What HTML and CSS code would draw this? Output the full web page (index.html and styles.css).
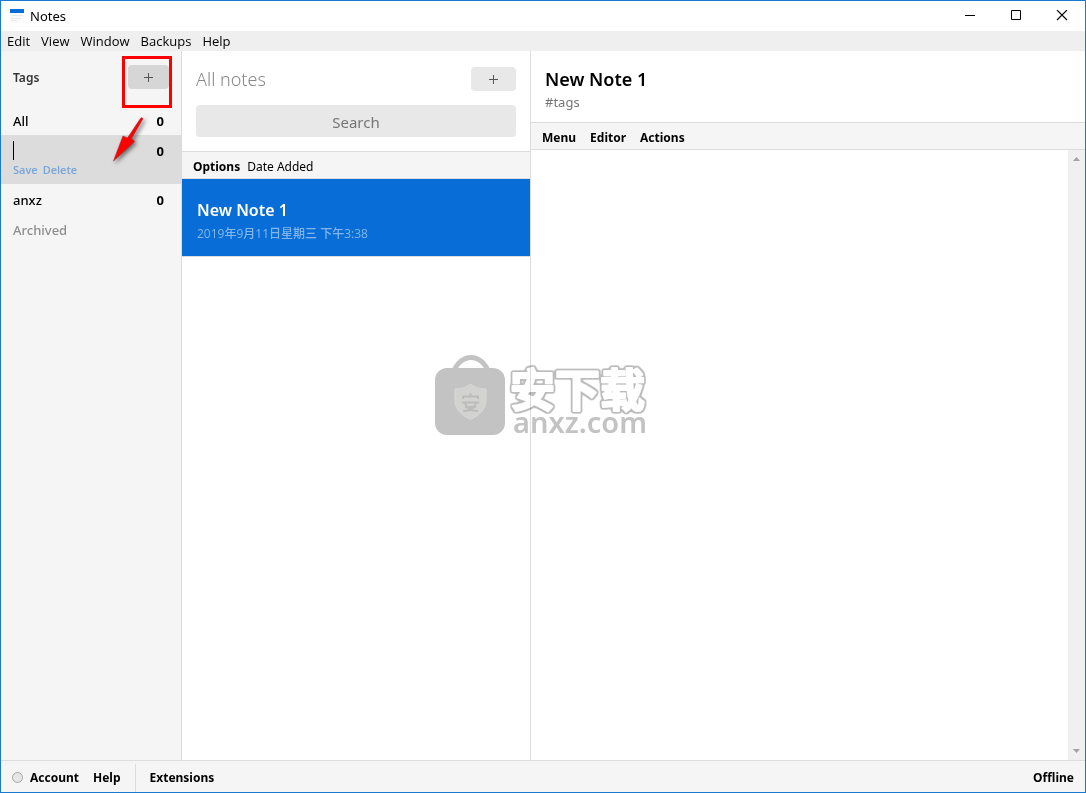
FILE: index.html
```html
<!DOCTYPE html>
<html lang="en">
<head>
<meta charset="utf-8">
<title>Notes</title>
<link rel="stylesheet" href="styles.css">
</head>
<body>
<div class="window">
  <header class="titlebar">
    <svg class="app-icon" width="14" height="14" viewBox="0 0 14 14" aria-hidden="true"><path fill="#fafafa" d="M0 0h14v14H0z"/><path fill="#086dd6" d="M0 0h14v4H0z"/><path stroke="#e9e9e9" d="M1 6.500h12M1 9.500h10M1 11.500h6"/></svg>
    <span class="app-title">Notes</span>
    <div class="window-controls">
      <button class="window-button" aria-label="Minimize"><svg width="12" height="12" viewBox="0 0 12 12"><path stroke="#000" d="M1 5.500h10"/></svg></button>
      <button class="window-button" aria-label="Maximize"><svg width="12" height="12" viewBox="0 0 12 12"><path fill="none" stroke="#000" d="M1.500 .5h9v9h-9z"/></svg></button>
      <button class="window-button" aria-label="Close"><svg width="12" height="12" viewBox="0 0 12 12"><path stroke="#000" stroke-width="1.100" d="M1 0l10 10M11 0L1 10"/></svg></button>
    </div>
  </header>
  <nav class="menubar">
    <button>Edit</button><button>View</button><button>Window</button><button>Backups</button><button>Help</button>
  </nav>
  <main class="columns">
    <aside class="tags">
      <div class="tags-header">
        <h2 class="tags-title">Tags</h2>
        <button class="add-button add-tag" aria-label="Add tag"><svg width="11" height="11" viewBox="0 0 11 11"><path stroke="#555" d="M1 5.500h9M5.500 1v9"/></svg></button>
      </div>
      <ul class="tag-list">
        <li class="tag"><div class="tag-row"><span>All</span><span class="count">0</span></div></li>
        <li class="tag selected">
          <div class="tag-row"><input class="tag-input" type="text" aria-label="Tag name"><span class="caret"></span><span class="count">0</span></div>
          <div class="tag-actions"><button>Save</button><button>Delete</button></div>
        </li>
        <li class="tag"><div class="tag-row"><span>anxz</span><span class="count">0</span></div></li>
        <li class="tag archived"><div class="tag-row"><span>Archived</span></div></li>
      </ul>
    </aside>
    <section class="notes">
      <div class="notes-header">
        <div class="notes-heading">
          <h1 class="notes-title">All notes</h1>
          <button class="add-button" aria-label="Add note"><svg width="11" height="11" viewBox="0 0 11 11"><path stroke="#555" d="M1 5.500h9M5.500 1v9"/></svg></button>
        </div>
        <input class="search" type="text" placeholder="Search" aria-label="Search">
      </div>
      <div class="toolbar options"><button>Options</button><span>Date Added</span></div>
      <article class="note">
        <h3 class="note-title">New Note 1</h3>
        <p class="note-date">2019年9月11日星期三 下午3:38</p>
      </article>
    </section>
    <section class="editor">
      <div class="editor-header">
        <input class="editor-title" type="text" value="New Note 1" aria-label="Title">
        <input class="editor-tags" type="text" placeholder="#tags" aria-label="Tags">
      </div>
      <div class="toolbar actions"><button>Menu</button><button>Editor</button><button>Actions</button></div>
      <div class="editor-body">
        <textarea class="editor-text" aria-label="Note text"></textarea>
        <div class="scrollbar">
          <svg width="7" height="4" viewBox="0 0 7 4"><path fill="#a3a3a3" d="M0 4L3.500 0L7 4z"/></svg>
          <svg width="7" height="4" viewBox="0 0 7 4"><path fill="#a3a3a3" d="M0 0L3.500 4L7 0z"/></svg>
        </div>
      </div>
    </section>
  </main>
  <footer class="statusbar">
    <span class="status-dot"></span>
    <button>Account</button><button>Help</button>
    <span class="divider"></span>
    <button>Extensions</button>
    <span class="offline">Offline</span>
  </footer>
</div>
<div class="highlight"></div>
<svg class="arrow" width="44" height="54" viewBox="0 0 44 54" aria-hidden="true"><path fill="#f00" stroke="#a22" stroke-width=".6" d="M33.500 7.500Q34.500 6 36 7.500L24.500 27.500L27.500 30.500L6.500 50L16 25L20.500 27L33.500 7.500z"/></svg>
<svg class="watermark" width="220" height="92" viewBox="0 0 220 92" role="img" aria-label="anxz.com">
  <defs>
    <filter id="outline" x="-5%" y="-20%" width="110%" height="140%">
      <feMorphology in="SourceAlpha" operator="dilate" radius="1" result="grown"/>
      <feGaussianBlur in="grown" stdDeviation=".8" result="soft"/>
      <feComponentTransfer in="soft" result="edge"><feFuncA type="linear" slope="3" intercept="-.3"/></feComponentTransfer>
      <feFlood flood-color="#bcbcbc"/>
      <feComposite in2="edge" operator="in" result="rim"/>
      <feMerge><feMergeNode in="rim"/><feMergeNode in="SourceGraphic"/></feMerge>
    </filter>
  </defs>
  <path fill="none" stroke="#c3c3c3" stroke-width="5" d="M19 20C25 -2 49 -2 55 20"/>
  <rect x="1" y="14" width="70" height="67" rx="12" fill="#c3c3c3"/>
  <path fill="#d2d2d0" stroke="#d8d8d8" d="M36.500 30Q43 35 52 35V48Q51 59 36.500 65.500Q22 59 21 48V35Q30 35 36.500 30z"/>
  <path fill="none" stroke="#bcbcbc" stroke-width="2" d="M36.500 39v3M29 45v-2.500h15V45M28 48.500h17M31 49Q33 57 44 57M42 49Q40 57 29 57M31 53h11"/>
  <text class="wm-name" x="76" y="53" filter="url(#outline)">安下载</text>
  <text class="wm-domain" x="79" y="79">anxz.com</text>
</svg>
</body>
</html>
```
FILE: styles.css
```css
* { box-sizing: border-box; }
body { margin: 0; background: #fff; color: #000; font: 13px/18px "Noto Sans", "Noto Sans CJK SC", sans-serif; }
button, input, textarea { font: inherit; color: inherit; border: 0; padding: 0; margin: 0; background: none; outline: none; }
h1, h2, h3, p, ul { margin: 0; padding: 0; }
ul { list-style: none; }
.window { display: flex; flex-direction: column; height: 100vh; border: 1px solid #1979d1; }
.titlebar { display: flex; align-items: center; height: 30px; padding-left: 9px; }
.app-icon { margin-right: 6px; }
.app-title { font-size: 13px; line-height: 28px; }
.window-controls { display: flex; margin-left: auto; }
.window-button { display: grid; place-items: center; width: 46px; height: 28px; }
.menubar { display: flex; align-items: center; gap: 11px; height: 20px; padding-left: 6px; background: #efefef; font-family: "Open Sans", sans-serif; }
.columns { display: flex; flex: 1; min-height: 0; }
.tags { width: 181px; background: #f5f5f5; border-right: 1px solid #dcdcdc; }
.tags-header { display: flex; justify-content: space-between; align-items: flex-start; height: 54px; padding: 14px 12px 0; }
.tags-title { font-size: 12px; line-height: 26px; font-weight: 600; color: #333; }
.add-button { display: grid; place-items: center; width: 45px; height: 24px; border-radius: 4px; background: #e8e8e8; }
.add-tag { width: 41px; background: #d6d6d6; }
.tag { padding: 0 17px 0 12px; font-size: 13px; font-weight: 500; }
.tag-row { display: flex; align-items: center; height: 30px; padding-top: 1px; }
.count { margin-left: auto; font-size: 13px; font-weight: 700; }
.selected { height: 49px; background: #dcdcdc; }
.tag-input { width: 0; }
.caret { width: 1px; height: 19px; background: #000; }
.tag-actions { display: flex; gap: 5px; font: 700 11px/10px "Open Sans", sans-serif; color: #78a5da; }
.tag-actions button { font-weight: 600; }
.archived { color: #8e8e8e; }
.notes { width: 349px; border-right: 1px solid #dcdcdc; }
.notes-header { padding: 16px 14px 14px; border-bottom: 1px solid #dcdcdc; }
.notes-heading { display: flex; justify-content: space-between; align-items: center; margin-bottom: 14px; }
.notes-title { font-size: 18px; line-height: 24px; font-weight: 300; color: #888; }
.search { display: block; width: 100%; height: 32px; padding-top: 2px; border-radius: 4px; background: #e8e8e8; text-align: center; font-size: 15px; }
.search::placeholder, .editor-tags::placeholder { color: #757575; opacity: 1; }
.toolbar { display: flex; align-items: center; height: 27px; background: #f5f5f5; border-bottom: 1px solid #dcdcdc; font-size: 12px; }
.toolbar button { font-weight: 700; }
.options { gap: 7px; padding: 3px 11px 0; }
.note { height: 78px; padding: 20px 15px 0; background: #086dd6; border-bottom: 1px solid #dcdcdc; color: #fff; }
.note-title { font-size: 16px; line-height: 22px; font-weight: 600; }
.note-date { padding-top: 4px; font: 500 12px/18px "Open Sans", "Noto Sans CJK SC", sans-serif; color: #84b6eb; }
.editor { display: flex; flex: 1; flex-direction: column; min-width: 0; }
.editor-header { height: 72px; padding: 15px 14px 0; border-bottom: 1px solid #dcdcdc; }
.editor-title { display: block; width: 100%; height: 26px; font-size: 18px; font-weight: 600; }
.editor-tags { display: block; width: 100%; height: 20px; font-size: 13px; }
.actions { gap: 14px; padding: 3px 11px 0; }
.editor-body { display: flex; flex: 1; }
.editor-text { flex: 1; resize: none; padding: 14px; }
.scrollbar { display: flex; flex-direction: column; justify-content: space-between; align-items: center; width: 17px; padding: 7px 0; background: #f0f0f0; }
.statusbar { display: flex; align-items: center; height: 32px; padding: 2px 11px 0; background: #f5f5f5; border-top: 1px solid #dcdcdc; font-size: 12px; font-weight: 700; gap: 14px; }
.statusbar button { font-weight: 700; }
.status-dot { width: 11px; height: 11px; border: 1px solid #a8a8a8; border-radius: 50%; background: #e6e6e6; margin-right: -7px; }
.divider { width: 1px; height: 28px; background: #dcdcdc; }
.offline { margin-left: auto; }
.highlight { position: absolute; left: 122px; top: 56px; width: 50px; height: 52px; border: 3px solid #f00; }
.arrow { position: absolute; left: 107px; top: 111px; filter: drop-shadow(2px 2px 2px #0008); }
.watermark { position: absolute; left: 434px; top: 354px; mix-blend-mode: multiply; pointer-events: none; }
.wm-name { font: 700 45px "Noto Sans CJK SC", sans-serif; fill: #fff; stroke: #fff; stroke-width: 2px; stroke-linejoin: round; }
.wm-domain { font: 600 29px "Noto Sans", sans-serif; fill: #c3c3c3; }
```
